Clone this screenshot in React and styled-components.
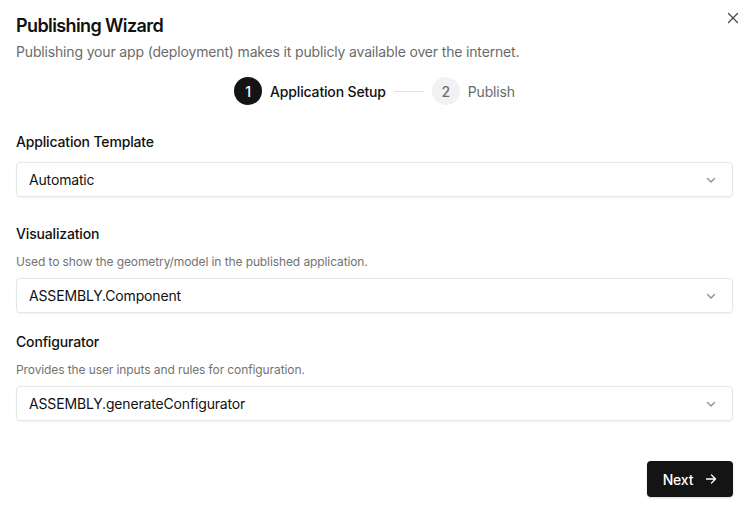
import React from 'react';
import styled, { createGlobalStyle } from 'styled-components';

const GlobalStyle = createGlobalStyle`
  html, body {
    margin: 0;
    padding: 0;
    background: #ffffff;
    font-family: Inter, "Liberation Sans", sans-serif;
    color: #111111;
    letter-spacing: -0.16px;
  }
  * { box-sizing: border-box; }
`

const Dialog = styled.div`
  position: relative;
  width: 754px;
  height: 514px;
  padding: 14px 21px 0 16px;
  display: flex;
  flex-direction: column;
`

const CloseBtn = styled.button`
  position: absolute;
  top: 11px;
  right: 14px;
  width: 14px;
  height: 14px;
  padding: 0;
  border: none;
  background: transparent;
  display: flex;
  align-items: center;
  justify-content: center;
  cursor: pointer;
`

const Title = styled.h2`
  margin: 0;
  font-size: 18px;
  line-height: 24px;
  font-weight: 600;
  letter-spacing: -0.6px;
`

const Subtitle = styled.p`
  margin: 4px 0 0;
  font-size: 14px;
  line-height: 20px;
  color: #6b6b6b;
`

const Stepper = styled.div`
  margin-top: 15px;
  display: flex;
  align-items: center;
  justify-content: center;
  gap: 8px;
`

const Step = styled.div`
  display: flex;
  align-items: center;
  gap: 8px;
`

const StepCircle = styled.span`
  width: 28px;
  height: 28px;
  border-radius: 50%;
  display: flex;
  align-items: center;
  justify-content: center;
  font-size: 14px;
  font-weight: 500;
  background: ${p => (p.$active ? '#141414' : '#f2f2f2')};
  color: ${p => (p.$active ? '#ffffff' : '#6b6b6b')};
`

const StepLabel = styled.span`
  font-size: 14px;
  font-weight: ${p => (p.$active ? 500 : 400)};
  color: ${p => (p.$active ? '#111111' : '#6b6b6b')};
`

const StepLine = styled.span`
  width: 30px;
  height: 1px;
  background: #e2e2e2;
`

const Field = styled.div`
  margin-top: ${p => p.$top}px;
  display: flex;
  flex-direction: column;
`

const Label = styled.label`
  font-size: 14px;
  line-height: 20px;
  font-weight: 500;
`

const Description = styled.div`
  margin-top: 10px;
  font-size: 12px;
  line-height: 16px;
  color: #737373;
  letter-spacing: -0.1px;
`

const Select = styled.div`
  margin-top: ${p => (p.$hasDesc ? 8 : 10)}px;
  height: 35px;
  border: 1px solid #e6e6e6;
  border-radius: 4px;
  box-shadow: 0 1px 2px rgba(0, 0, 0, 0.05);
  display: flex;
  align-items: center;
  justify-content: space-between;
  padding: 0 15px 0 12px;
  font-size: 14px;
  color: #111111;
`

const Footer = styled.div`
  margin-top: 40px;
  display: flex;
  justify-content: flex-end;
`

const NextButton = styled.button`
  width: 86px;
  height: 36px;
  border: none;
  border-radius: 4px;
  background: #141414;
  color: #ffffff;
  font-family: inherit;
  font-size: 14px;
  font-weight: 500;
  letter-spacing: -0.16px;
  display: flex;
  align-items: center;
  justify-content: center;
  gap: 12px;
  box-shadow: 0 1px 2px rgba(0, 0, 0, 0.15);
  cursor: pointer;
`

const Chevron = () => (
  <svg width="12" height="12" viewBox="0 0 12 12" fill="none">
    <path d="M2.5 4.5 L6 8 L9.5 4.5" stroke="#8a8a8a" strokeWidth="1.2" strokeLinecap="round" strokeLinejoin="round" />
  </svg>
);

const fields = [
  { label: 'Application Template', value: 'Automatic', top: 27 },
  { label: 'Visualization', desc: 'Used to show the geometry/model in the published application.', value: 'ASSEMBLY.Component', top: 27 },
  { label: 'Configurator', desc: 'Provides the user inputs and rules for configuration.', value: 'ASSEMBLY.generateConfigurator', top: 19 },
];

const App = () => (
  <>
    <GlobalStyle />
    <Dialog>
      <CloseBtn aria-label="Close">
        <svg width="12" height="12" viewBox="0 0 12 12">
          <path d="M1.5 1.5 L10.5 10.5 M10.5 1.5 L1.5 10.5" stroke="#444" strokeWidth="1.2" strokeLinecap="round" />
        </svg>
      </CloseBtn>
      <Title>Publishing Wizard</Title>
      <Subtitle>Publishing your app (deployment) makes it publicly available over the internet.</Subtitle>
      <Stepper>
        <Step>
          <StepCircle $active>1</StepCircle>
          <StepLabel $active>Application Setup</StepLabel>
        </Step>
        <StepLine />
        <Step>
          <StepCircle>2</StepCircle>
          <StepLabel>Publish</StepLabel>
        </Step>
      </Stepper>
      {fields.map(f => (
        <Field key={f.label} $top={f.top}>
          <Label>{f.label}</Label>
          {f.desc && <Description>{f.desc}</Description>}
          <Select $hasDesc={!!f.desc}>
            <span>{f.value}</span>
            <Chevron />
          </Select>
        </Field>
      ))}
      <Footer>
        <NextButton>
          Next
          <svg width="12" height="12" viewBox="0 0 12 12" fill="none">
            <path d="M1.5 6 H10.5 M6.5 2 L10.5 6 L6.5 10" stroke="#fff" strokeWidth="1.3" strokeLinecap="round" strokeLinejoin="round" />
          </svg>
        </NextButton>
      </Footer>
    </Dialog>
  </>
);

export default App;
